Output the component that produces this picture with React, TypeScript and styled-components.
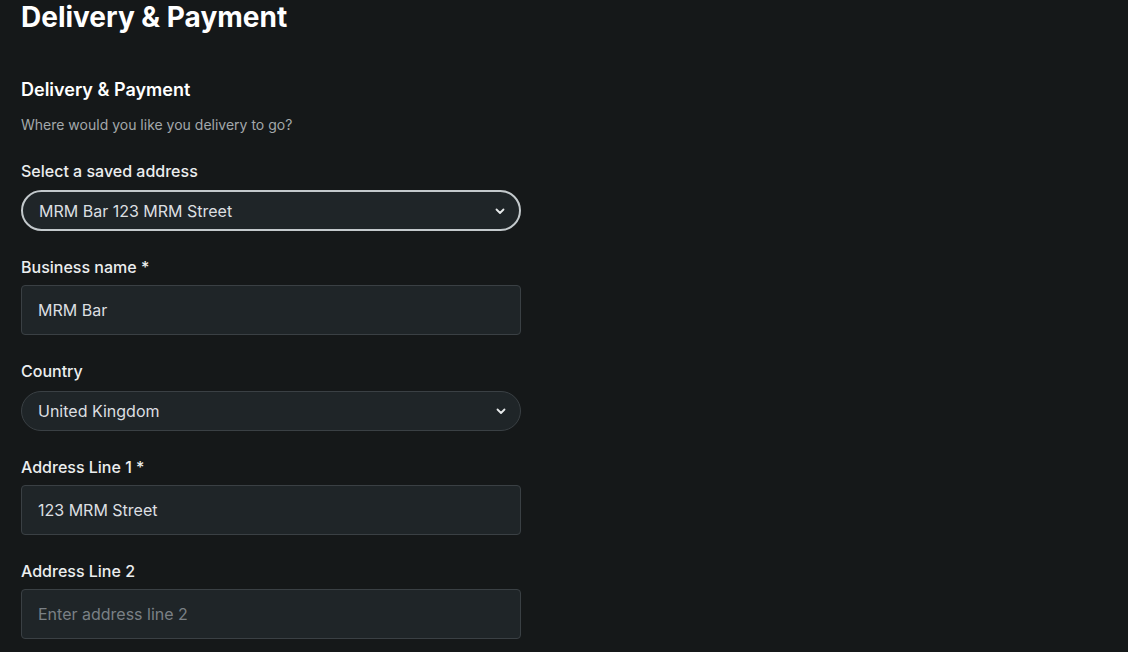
import React from 'react';
import styled, { createGlobalStyle } from 'styled-components';

const GlobalStyle = createGlobalStyle`
  html, body {
    margin: 0;
    padding: 0;
    background: #151819;
  }
  body {
    font-family: Inter, "Noto Sans", sans-serif;
    color: #eceeef;
    -webkit-font-smoothing: antialiased;
  }
`;

const Page = styled.div`
  padding: 0 21px;
  width: 500px;
`;

const Title = styled.h1`
  margin: 0;
  font-size: 28px;
  line-height: 34px;
  font-weight: 700;
  color: #ffffff;
`;

const SectionTitle = styled.h2`
  margin: 44px 0 0;
  font-size: 18px;
  line-height: 24px;
  font-weight: 600;
  color: #ffffff;
`;

const Hint = styled.p`
  margin: 13px 0 0;
  font-size: 14px;
  line-height: 20px;
  color: #a3a8ab;
`;

const Form = styled.form`
  display: flex;
  flex-direction: column;
  gap: 26px;
  margin-top: 26px;
`;

const Field = styled.label`
  display: flex;
  flex-direction: column;
  gap: 8px;
`;

const Label = styled.span`
  font-size: 16px;
  line-height: 20px;
  font-weight: 500;
  color: #eceeef;
`;

const TextInput = styled.input`
  box-sizing: border-box;
  width: 100%;
  height: 50px;
  padding: 0 16px;
  background: #1f2528;
  border: 1px solid #3a4044;
  border-radius: 4px;
  font-family: inherit;
  font-size: 16px;
  color: #dcdfe1;
  outline: none;

  &::placeholder {
    color: #7a8085;
  }
`;

const SelectBox = styled.div<{ $focused?: boolean }>`
  box-sizing: border-box;
  display: flex;
  align-items: center;
  justify-content: space-between;
  height: ${p => (p.$focused ? '41px' : '40px')};
  margin-top: ${p => (p.$focused ? '1px' : '2px')};
  padding: 0 13px 0 16px;
  background: #1f2528;
  border: ${p => (p.$focused ? '2px solid #c3c9cc' : '1px solid #3a4044')};
  border-radius: 999px;
  font-size: 16px;
  color: #dcdfe1;
`;

const Chevron = () => (
  <svg width="12" height="12" viewBox="0 0 12 12" fill="none">
    <path d="M2.5 4.5 L6 8 L9.5 4.5" stroke="#e6e9ea" strokeWidth="1.8" strokeLinecap="round" strokeLinejoin="round" />
  </svg>
);

export default function App() {
  return (
    <Page>
      <GlobalStyle />
      <Title>Delivery &amp; Payment</Title>
      <SectionTitle>Delivery &amp; Payment</SectionTitle>
      <Hint>Where would you like you delivery to go?</Hint>
      <Form>
        <Field>
          <Label>Select a saved address</Label>
          <SelectBox $focused>
            <span>MRM Bar 123 MRM Street</span>
            <Chevron />
          </SelectBox>
        </Field>
        <Field>
          <Label>Business name *</Label>
          <TextInput defaultValue="MRM Bar" />
        </Field>
        <Field>
          <Label>Country</Label>
          <SelectBox>
            <span>United Kingdom</span>
            <Chevron />
          </SelectBox>
        </Field>
        <Field>
          <Label>Address Line 1 *</Label>
          <TextInput defaultValue="123 MRM Street" />
        </Field>
        <Field>
          <Label>Address Line 2</Label>
          <TextInput placeholder="Enter address line 2" />
        </Field>
      </Form>
    </Page>
  );
}
